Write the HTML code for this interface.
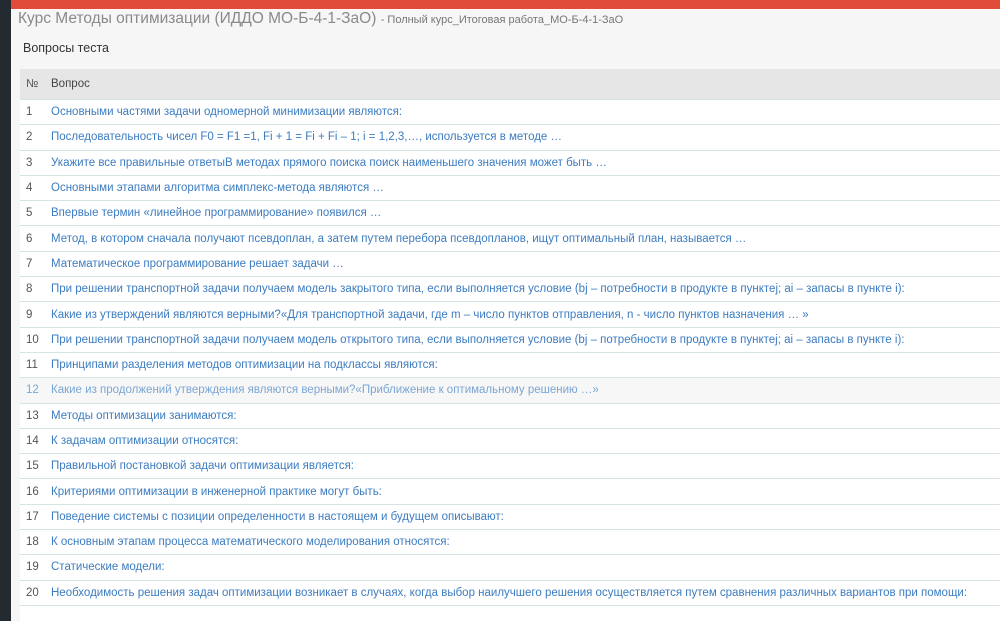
<!DOCTYPE html>
<html><head><meta charset="utf-8"><style>
body{margin:0;width:1000px;height:621px;overflow:hidden;background:#f6f6f6;font-family:"Liberation Sans",sans-serif;position:relative}
.side{position:absolute;left:0;top:0;width:11px;height:621px;background:#232b31}
.top{position:absolute;left:11px;top:0;right:0;height:9px;background:#e04b3a}
.h1{position:absolute;left:18px;top:10px;font-size:15.5px;color:#8a8a8a;white-space:nowrap}
.h1 small{font-size:11px;color:#777}
.h2{position:absolute;left:23px;top:41px;font-size:12.5px;color:#333}
.wb{position:absolute;left:20px;top:600px;width:980px;height:21px;background:#fff}
table{position:absolute;left:20px;top:69px;width:980px;border-collapse:collapse;font-size:11.5px;table-layout:fixed}
th{background:#e6e6e6;height:30px;text-align:left;font-weight:normal;color:#444;padding:0}
td{background:#fff;height:24.3px;border-top:1px solid #d6e4e4;color:#3c7cc0;white-space:nowrap;padding:0;overflow:hidden}
td:first-child,th:first-child{width:25px;padding-left:6px;color:#555}
tr.g td{background:#f7f7f7;color:#7aa6d4}
</style></head><body>
<div class="side"></div><div class="top"></div>
<div class="wb"></div>
<div class="h1">Курс Методы оптимизации (ИДДО МО-Б-4-1-ЗаО) <small>- Полный курс_Итоговая работа_МО-Б-4-1-ЗаО</small></div>
<div class="h2">Вопросы теста</div>
<table>
<tr><th>№</th><th>Вопрос</th></tr>
<tr><td>1</td><td>Основными частями задачи одномерной минимизации являются:</td></tr>
<tr><td>2</td><td>Последовательность чисел F0 = F1 =1, Fi + 1 = Fi + Fi – 1; i = 1,2,3,…, используется в методе …</td></tr>
<tr><td>3</td><td>Укажите все правильные ответыВ методах прямого поиска поиск наименьшего значения может быть …</td></tr>
<tr><td>4</td><td>Основными этапами алгоритма симплекс-метода являются …</td></tr>
<tr><td>5</td><td>Впервые термин «линейное программирование» появился …</td></tr>
<tr><td>6</td><td>Метод, в котором сначала получают псевдоплан, а затем путем перебора псевдопланов, ищут оптимальный план, называется …</td></tr>
<tr><td>7</td><td>Математическое программирование решает задачи …</td></tr>
<tr><td>8</td><td>При решении транспортной задачи получаем модель закрытого типа, если выполняется условие (bj – потребности в продукте в пунктеj; ai – запасы в пункте i):</td></tr>
<tr><td>9</td><td>Какие из утверждений являются верными?«Для транспортной задачи, где m – число пунктов отправления, n - число пунктов назначения … »</td></tr>
<tr><td>10</td><td>При решении транспортной задачи получаем модель открытого типа, если выполняется условие (bj – потребности в продукте в пунктеj; ai – запасы в пункте i):</td></tr>
<tr><td>11</td><td>Принципами разделения методов оптимизации на подклассы являются:</td></tr>
<tr class="g"><td>12</td><td>Какие из продолжений утверждения являются верными?«Приближение к оптимальному решению …»</td></tr>
<tr><td>13</td><td>Методы оптимизации занимаются:</td></tr>
<tr><td>14</td><td>К задачам оптимизации относятся:</td></tr>
<tr><td>15</td><td>Правильной постановкой задачи оптимизации является:</td></tr>
<tr><td>16</td><td>Критериями оптимизации в инженерной практике могут быть:</td></tr>
<tr><td>17</td><td>Поведение системы с позиции определенности в настоящем и будущем описывают:</td></tr>
<tr><td>18</td><td>К основным этапам процесса математического моделирования относятся:</td></tr>
<tr><td>19</td><td>Статические модели:</td></tr>
<tr><td>20</td><td>Необходимость решения задач оптимизации возникает в случаях, когда выбор наилучшего решения осуществляется путем сравнения различных вариантов при помощи:</td></tr>
<tr><td style="height:1px"></td><td style="height:1px"></td></tr>
</table>
</body></html>
